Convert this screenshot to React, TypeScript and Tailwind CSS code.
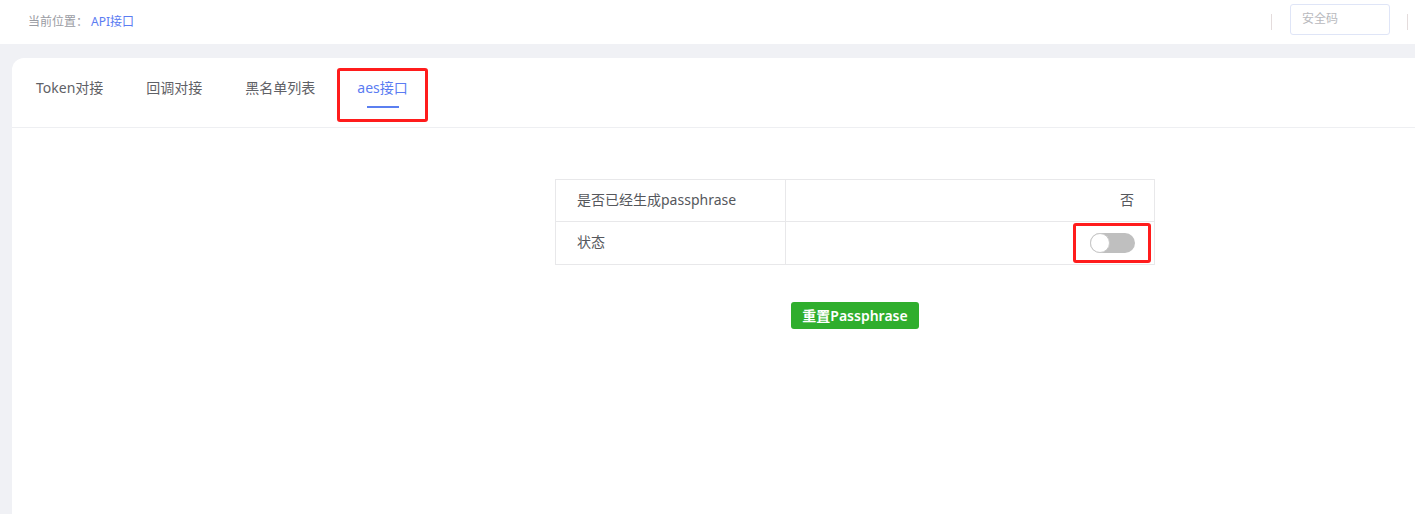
const tabs = ['Token对接', '回调对接', '黑名单列表', 'aes接口'];

export default function App() {
  return (
    <div
      className="flex h-[514px] w-[1415px] flex-col overflow-hidden bg-[#f0f1f5]"
      style={{ fontFamily: '"Noto Sans", "Noto Sans CJK SC", sans-serif' }}
    >
      {/* header bar */}
      <div className="flex h-[44px] shrink-0 items-center justify-between bg-white pl-[28px] pr-[7px]">
        <div className="text-[12px]">
          <span className="text-[#9a9ca3]">当前位置：</span>
          <span className="ml-[3px] text-[#5b7cf2]">API接口</span>
        </div>
        <div className="flex items-center">
          <div className="h-[16px] w-px bg-[#e4dcdc]" />
          <div className="ml-[18px] mt-[-6px] flex h-[31px] w-[100px] items-center rounded-[3px] border border-[#dfe5f7] px-[11px] text-[12px] text-[#b8b9bd]">
            安全码
          </div>
          <div className="ml-[17px] h-[16px] w-px bg-[#e4dcdc]" />
        </div>
      </div>

      {/* card */}
      <div className="ml-[12px] mt-[14px] flex-1 rounded-tl-[12px] bg-white">
        <div className="flex h-[70px] items-start gap-[43px] border-b border-[#eeeff2] pl-[24px] pt-[10px]">
          {tabs.map((t, i) => {
            const active = i === tabs.length - 1;
            return active ? (
              <div
                key={t}
                className="ml-[-21px] flex h-[54px] flex-col items-center rounded-[3px] border-[3px] border-[#ff1c1c] px-[17px] pt-[7px] text-[14px] leading-[20px] text-[#5b7cf2]"
              >
                <span>{t}</span>
                <span className="mt-[8px] h-[2px] w-[32px] bg-[#5b7ff0]" />
              </div>
            ) : (
              <div key={t} className="mt-[10px] text-[14px] leading-[20px] text-[#5f6166]">
                {t}
              </div>
            );
          })}
        </div>

        <div className="ml-[543px] flex w-[600px] flex-col items-center pt-[51px]">
          <div className="w-[600px] border border-[#e8e8ea] text-[14px] leading-[20px] text-[#55575c]">
            <div className="flex h-[42px] border-b border-[#e8e8ea]">
              <div className="flex w-[230px] items-center border-r border-[#e8e8ea] pb-[2px] pl-[21px]">是否已经生成passphrase</div>
              <div className="flex flex-1 items-center justify-end pb-[2px] pr-[20px]">否</div>
            </div>
            <div className="flex h-[42px]">
              <div className="flex w-[230px] items-center border-r border-[#e8e8ea] pb-[2px] pl-[21px]">状态</div>
              <div className="flex flex-1 items-center justify-end pr-[3px]">
                <div className="flex h-[40px] w-[78px] items-center justify-center rounded-[3px] border-[3px] border-[#ff1c1c]">
                  <div className="relative h-[20px] w-[45px] rounded-full bg-[#bfbfbf]">
                    <div className="absolute left-0 top-0 h-[20px] w-[20px] rounded-full border border-[#c8c8c8] bg-white" />
                  </div>
                </div>
              </div>
            </div>
          </div>

          <button className="mt-[37px] h-[27px] rounded-[3px] bg-[#2fae2d] px-[11px] text-[14px] font-semibold text-white">
            重置Passphrase
          </button>
        </div>
      </div>
    </div>
  );
}
